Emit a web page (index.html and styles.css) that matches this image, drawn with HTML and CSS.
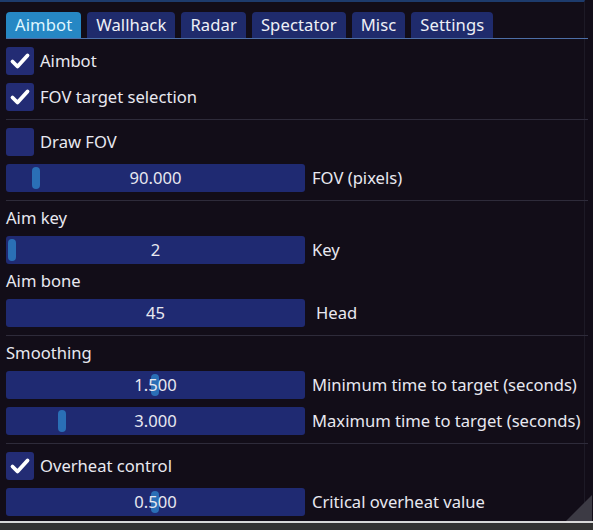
FILE: index.html
```html
<!DOCTYPE html>
<html lang="en">
<head>
    <meta charset="UTF-8">
    <meta name="viewport" content="width=device-width, initial-scale=1.0">
    <title>Aimbot settings</title>
    <link rel="stylesheet" href="styles.css">
</head>
<body>
    <div class="window">
        <div class="tabs">
            <span class="tab active">Aimbot</span>
            <span class="tab">Wallhack</span>
            <span class="tab">Radar</span>
            <span class="tab">Spectator</span>
            <span class="tab">Misc</span>
            <span class="tab">Settings</span>
        </div>

        <div class="panel">
            <div class="row">
                <span class="check on"><svg viewBox="0 0 28 28"><path d="M6.5 14.5 L11.5 19.5 L21.5 8.5"/></svg></span>
                <span class="label">Aimbot</span>
            </div>
            <div class="row">
                <span class="check on"><svg viewBox="0 0 28 28"><path d="M6.5 14.5 L11.5 19.5 L21.5 8.5"/></svg></span>
                <span class="label">FOV target selection</span>
            </div>
            <div class="sep"></div>
            <div class="row">
                <span class="check"></span>
                <span class="label">Draw FOV</span>
            </div>
            <div class="row">
                <div class="slider"><span class="grab" style="left: 26px"></span><span class="value">90.000</span></div>
                <span class="label">FOV (pixels)</span>
            </div>
            <div class="sep"></div>
            <div class="text">Aim key</div>
            <div class="row">
                <div class="slider"><span class="grab" style="left: 2px"></span><span class="value">2</span></div>
                <span class="label">Key</span>
            </div>
            <div class="text">Aim bone</div>
            <div class="row">
                <div class="slider"><span class="value">45</span></div>
                <span class="label wide">Head</span>
            </div>
            <div class="sep"></div>
            <div class="text">Smoothing</div>
            <div class="row">
                <div class="slider"><span class="grab" style="left: 145px"></span><span class="value">1.500</span></div>
                <span class="label">Minimum time to target (seconds)</span>
            </div>
            <div class="row">
                <div class="slider"><span class="grab" style="left: 52px"></span><span class="value">3.000</span></div>
                <span class="label">Maximum time to target (seconds)</span>
            </div>
            <div class="sep"></div>
            <div class="row">
                <span class="check on"><svg viewBox="0 0 28 28"><path d="M6.5 14.5 L11.5 19.5 L21.5 8.5"/></svg></span>
                <span class="label">Overheat control</span>
            </div>
            <div class="row">
                <div class="slider"><span class="grab" style="left: 145px"></span><span class="value">0.500</span></div>
                <span class="label">Critical overheat value</span>
            </div>
        </div>
        <div class="grip"></div>
    </div>
    <div class="statusbar"></div>
</body>
</html>
```

FILE: styles.css
```css
body {
    margin: 0;
    padding: 0;
    background-color: #120d18;
    color: #e8e8f0;
    font-family: "Noto Sans", sans-serif;
    font-size: 16.6px;
}
.window {
    position: relative;
    height: 521px;
    box-sizing: border-box;
    border-top: 2px solid #1d3b6c;
    border-right: 1px solid #1d1a26;
    margin-right: 8px;
    padding: 10px 0 0 6px;
}
.tabs {
    display: flex;
    gap: 6px;
    height: 26px;
    border-bottom: 1px solid #4d6ea6;
    margin-right: -4px;
}
.tab {
    display: flex;
    align-items: center;
    padding: 0 9px 2px;
    letter-spacing: 0.1px;
    background-color: #1f2b6c;
    border-radius: 4px 4px 0 0;
    color: #eef0f6;
}
.tab.active {
    background-color: #2687c4;
    color: #dff6ff;
}
.panel {
    display: flex;
    flex-direction: column;
    gap: 8px;
    padding-top: 8px;
}
.row {
    display: flex;
    align-items: center;
    height: 28px;
    gap: 7px;
}
.label,
.value {
    margin-bottom: 2px;
}
.text {
    height: 19px;
    line-height: 17px;
}
.sep {
    height: 1px;
    background-color: #2e2b3a;
    margin-right: -4px;
}
.check {
    width: 28px;
    height: 28px;
    margin-right: -1px;
    background-color: #232c74;
    border-radius: 3px;
    display: flex;
}
.check svg {
    width: 28px;
    height: 28px;
}
.check path {
    fill: none;
    stroke: #ffffff;
    stroke-width: 3.8;
    stroke-linecap: round;
    stroke-linejoin: round;
}
.slider {
    position: relative;
    width: 299px;
    height: 28px;
    background-color: #1f2a72;
    border-radius: 3px;
    display: flex;
    align-items: center;
    justify-content: center;
}
.grab {
    position: absolute;
    top: 3px;
    width: 8px;
    height: 22px;
    border-radius: 4px;
    background-color: #2a6fb6;
}
.value {
    position: relative;
}
.label.wide {
    margin-left: 4px;
}
.grip {
    position: absolute;
    right: -8px;
    bottom: 0;
    width: 0;
    height: 0;
    border-left: 26px solid transparent;
    border-bottom: 26px solid #3c3a44;
}
.statusbar {
    height: 9px;
    border-top: 2px solid #d8d8d8;
    background-color: #333333;
}
```
